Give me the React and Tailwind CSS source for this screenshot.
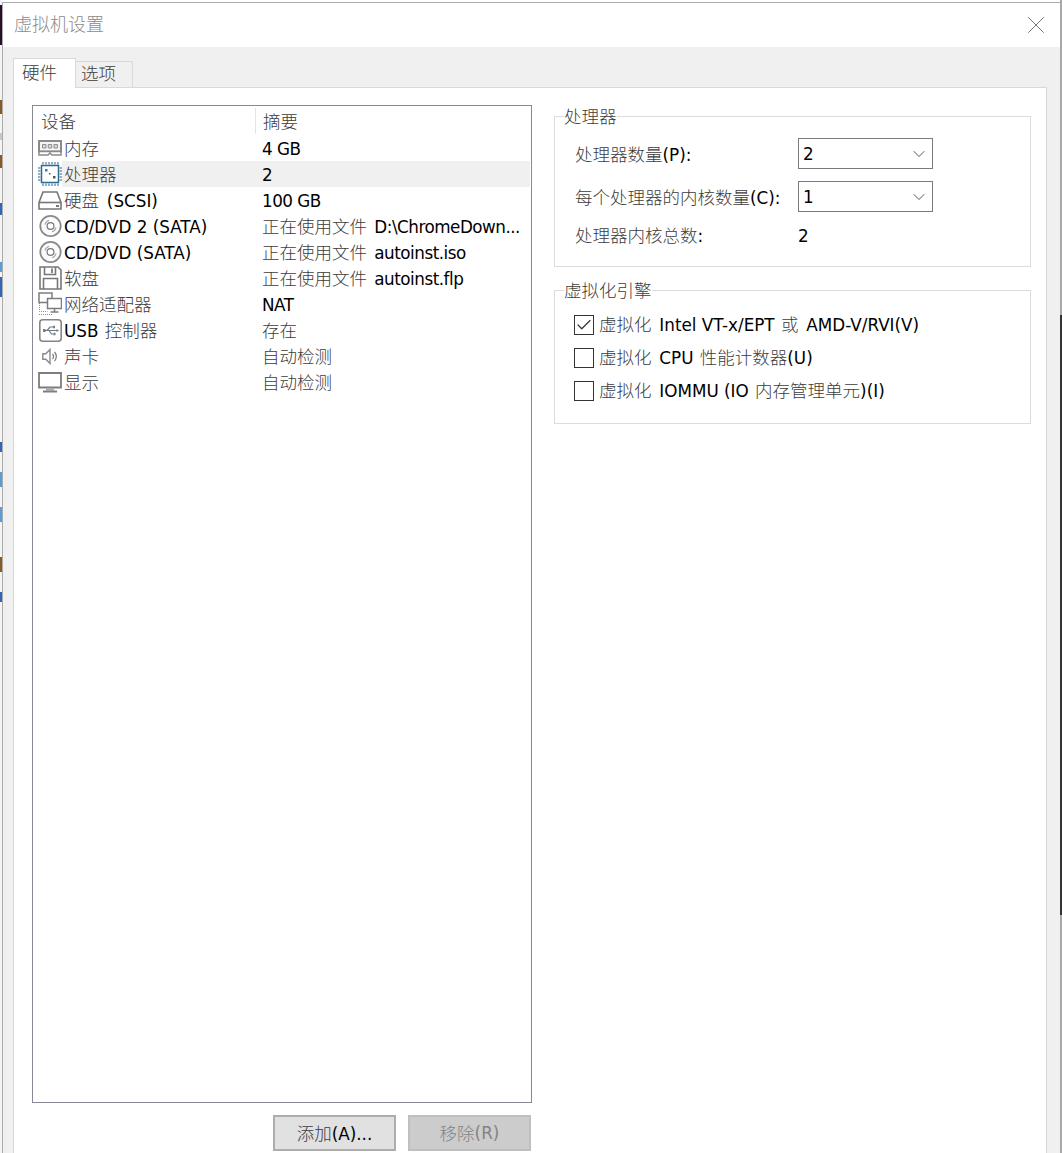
import { Check, ChevronDown, X } from 'lucide-react';

const FONT = "font-['DejaVu_Sans','Noto_Sans_CJK_SC',sans-serif]";

// cjk glyphs are thin, gray and a bit bigger in the dialog, latin ones are solid black.
// the space between cjk and latin is also wider than a plain one
function T({ children, className = '' }) {
  const parts = children.split(/([\u3000-\u9fff]+)/);
  return (
    <span className={className}>
      {parts.map((p, i) => {
        if (!/[\u3000-\u9fff]/.test(p)) return <span key={i}>{p}</span>;
        const gapAfter = parts[i + 1]?.startsWith(' ');
        const gapBefore = parts[i - 1]?.endsWith(' ');
        return (
          <span
            key={i}
            className={`text-[17.5px] font-light tracking-normal text-[#3c3c3c] ${gapAfter ? 'mr-[2.5px]' : ''} ${gapBefore ? 'ml-[1px]' : ''}`}
          >
            {p}
          </span>
        );
      })}
    </span>
  );
}

function MemoryIcon() {
  return (
    <svg width="24" height="16" viewBox="0 0 24 16" fill="none">
      <path d="M1 1h22v10.5H1z" stroke="#8a8a8a" strokeWidth="2" fill="#f5f5f5" />
      <path d="M1 11.5h22V15H14l-2-2-2 2H1z" stroke="#8a8a8a" strokeWidth="1.5" fill="#fff" />
      <path d="M4.5 4.5h3.500v3.500h-3.500zM10.250 4.500h3.500v3.500h-3.500zM16 4.500h3.500v3.500H16z" stroke="#8f8f8f" fill="#d8d8d8" />
    </svg>
  );
}

function CpuIcon() {
  return (
    <svg width="24" height="24" viewBox="0 0 24 24" fill="none">
      <rect x="3.5" y="3.5" width="17" height="17" stroke="#2f6a8f" strokeWidth="1.5" fill="#fff" />
      <path d="M5 0v2.500M8 0v2.500M11 0v2.500M14 0v2.500M17 0v2.500M20 0v2.500M5 21.500V24M8 21.500V24M11 21.500V24M14 21.500V24M17 21.500V24M20 21.500V24M0 6h2.500M0 9h2.500M0 12h2.500M0 15h2.500M0 18h2.500M21.500 6H24M21.500 9H24M21.500 12H24M21.500 15H24M21.500 18H24" stroke="#6b97b5" strokeWidth="1.500" />
      <path d="M7 7h2.500v2.500H7z" fill="#2f7fb0" />
      <path d="M15 14h2.500v2.500H15zM11 11h1.500v1.500H11z" fill="#4a5a66" />
    </svg>
  );
}

function DiskIcon() {
  return (
    <svg width="24" height="19" viewBox="0 0 24 19" fill="none">
      <path d="M5 1h14l4 10.500V18H1v-6.500z" stroke="#777" strokeWidth="1.600" fill="#fff" />
      <path d="M1 11.500h22" stroke="#777" strokeWidth="1.600" />
      <path d="M18 14h3v2h-3z" fill="#777" />
    </svg>
  );
}

function CdIcon() {
  return (
    <svg width="24" height="24" viewBox="0 0 24 24" fill="none">
      <circle cx="12.500" cy="12" r="10.200" stroke="#8a8a8a" strokeWidth="1.800" fill="#fbfbfb" />
      <circle cx="12.500" cy="12" r="3.400" stroke="#777" strokeWidth="1.200" fill="#fff" />
      <path d="M7 10.500a6 6 0 0 1 4-4.200M18 13.500a6 6 0 0 1-4 4.200" stroke="#a8a8a8" strokeWidth="1.200" />
    </svg>
  );
}

function FloppyIcon() {
  return (
    <svg width="24" height="24" viewBox="0 0 24 24" fill="none">
      <path d="M2 1h18l3 3v19H2z" stroke="#777" strokeWidth="1.600" fill="#fff" />
      <path d="M6.500 1v7.500h11V1M5.500 23V12.500h14V23" stroke="#777" strokeWidth="1.600" />
      <path d="M13 2.500h2V7h-2z" fill="#888" />
    </svg>
  );
}

function NetworkIcon() {
  return (
    <svg width="24" height="24" viewBox="0 0 24 24" fill="none">
      <path d="M1 1h13v9.500H1z" stroke="#7d7d7d" strokeWidth="1.500" fill="#fff" />
      <path d="M9.500 6.500h14v10h-14z" stroke="#7d7d7d" strokeWidth="1.500" fill="#fff" />
      <path d="M16.500 16.500v3M12.500 20h8" stroke="#7d7d7d" strokeWidth="1.500" />
      <path d="M1.500 11v8.500h8M1 22.500h14" stroke="#8a8a8a" strokeDasharray="1 1" />
    </svg>
  );
}

function UsbIcon() {
  return (
    <svg width="24" height="23" viewBox="0 0 24 23" fill="none">
      <rect x="1.800" y="0.800" width="21.400" height="21.400" rx="3" stroke="#858585" strokeWidth="1.600" fill="#fff" />
      <path d="M6 11.500h13M9 11.500l3-3.500h3M11 11.500l2.500 3.500h2" stroke="#6f7f88" strokeWidth="1.200" />
      <path d="M5 10h2.500v3H5zM15 6.800h2v2.400h-2zM15.500 13.800h2v2.400h-2z" fill="#6f7f88" />
      <path d="M18.500 10l2.500 1.500-2.500 1.500z" fill="#6f7f88" />
    </svg>
  );
}

function SoundIcon() {
  return (
    <svg width="24" height="17" viewBox="0 0 24 17" fill="none">
      <path d="M4.800 5.800h3l4.200-4.300v14l-4.200-4.300h-3z" stroke="#8a8a8a" strokeWidth="1.400" fill="#fff" />
      <path d="M14.500 6a3.500 3.500 0 0 1 0 5M16.500 4a6.500 6.500 0 0 1 0 9" stroke="#777" strokeWidth="1.200" />
    </svg>
  );
}

function MonitorIcon() {
  return (
    <svg width="24" height="21" viewBox="0 0 24 21" fill="none">
      <path d="M1 1h22v14.500H1z" stroke="#7d7d7d" strokeWidth="1.800" fill="#fff" />
      <path d="M8 16.500h8v2H8z" fill="#a8a8a8" />
      <path d="M5 19.500h14" stroke="#7d7d7d" strokeWidth="2" />
    </svg>
  );
}

const devices = [
  { icon: <MemoryIcon />, name: '内存', summary: '4 GB' },
  { icon: <CpuIcon />, name: '处理器', summary: '2', selected: true },
  { icon: <DiskIcon />, name: '硬盘 (SCSI)', summary: '100 GB' },
  { icon: <CdIcon />, name: 'CD/DVD 2 (SATA)', summary: '正在使用文件 D:\\ChromeDown...' },
  { icon: <CdIcon />, name: 'CD/DVD (SATA)', summary: '正在使用文件 autoinst.iso' },
  { icon: <FloppyIcon />, name: '软盘', summary: '正在使用文件 autoinst.flp' },
  { icon: <NetworkIcon />, name: '网络适配器', summary: 'NAT' },
  { icon: <UsbIcon />, name: 'USB 控制器', summary: '存在' },
  { icon: <SoundIcon />, name: '声卡', summary: '自动检测' },
  { icon: <MonitorIcon />, name: '显示', summary: '自动检测' },
];

function DeviceRow({ icon, name, summary, selected }) {
  return (
    <div className="flex h-[26px] items-center">
      <div className="flex w-[25px] shrink-0 pl-[1px]">{icon}</div>
      <div className={`flex h-full flex-1 items-center pt-[2px] leading-[24px] ${selected ? 'bg-[#f0f0f0]' : ''}`}>
        <div className="w-[199px] shrink-0 whitespace-nowrap pl-[2px]"><T>{name}</T></div>
        <div className="whitespace-nowrap pl-[1px] tracking-[-0.5px]"><T>{summary}</T></div>
      </div>
    </div>
  );
}

function GroupBox({ title, className, children }) {
  return (
    <div className={`relative border border-[#dcdcdc] ${className}`}>
      <div className="absolute -top-[13px] left-[9px] bg-white leading-[26px]"><T>{title}</T></div>
      {children}
    </div>
  );
}

function Select({ value }) {
  return (
    <div className="flex h-[31px] w-[135px] items-center justify-between border border-[#7a7a7a] pl-[4px] pr-[3px]">
      <span>{value}</span>
      <ChevronDown size={20} strokeWidth={1} className="text-[#333]" />
    </div>
  );
}

function CheckRow({ checked, label }) {
  return (
    <div className="flex h-[33px] items-center gap-[5px]">
      <div className="flex h-[20px] w-[20px] items-center justify-center border border-[#333]">
        {checked && <Check size={18} strokeWidth={1.6} className="text-[#333]" />}
      </div>
      <T className="pt-[2px]">{label}</T>
    </div>
  );
}

export default function App() {
  return (
    <div className={`${FONT} relative flex h-[1153px] w-[1062px] overflow-hidden bg-white text-[16.8px] text-black`}>
      {/* slivers of the window behind the dialog */}
      <div className="flex w-[2px] shrink-0 flex-col bg-[#f4f4f4]">
        <div className="mt-[5px] h-[40px] bg-[#2a0f2a]" />
        <div className="mt-[55px] h-[14px] bg-[#8a5a20]" />
        <div className="mt-[19px] h-[7px] bg-[#c8c8c8]" />
        <div className="mt-[15px] h-[13px] bg-[#8a5a20]" />
        <div className="mt-[35px] h-[12px] bg-[#2f68b8]" />
        <div className="mt-[47px] h-[10px] bg-[#5b9bd8]" />
        <div className="mt-[5px] h-[20px] bg-[#2f68b8]" />
        <div className="mt-[145px] h-[10px] bg-[#2f68b8]" />
        <div className="mt-[20px] h-[15px] bg-[#5b9bd8]" />
        <div className="mt-[20px] h-[15px] bg-[#5b9bd8]" />
        <div className="mt-[35px] h-[15px] bg-[#8a5a20]" />
        <div className="mt-[20px] h-[10px] bg-[#2f68b8]" />
      </div>
      <div className="mt-[2px] flex min-w-0 flex-1 flex-col border-t border-l border-[#ababab]">
        <div className="flex h-[44px] shrink-0 items-center justify-between bg-white pl-[11px] pr-[9px]">
          <span className="text-[18px] font-light leading-[40px] text-[#8c8c8c]">虚拟机设置</span>
          <X size={30} strokeWidth={0.8} className="text-[#777]" />
        </div>
        <div className="flex min-h-0 flex-1 flex-col bg-[#f0f0f0] pl-[10px] pr-[13px] pt-[11px]">
          <div className="relative z-10 flex h-[30px] shrink-0 items-end">
            <div className="flex h-[30px] w-[63px] items-center border border-b-0 border-[#d9d9d9] bg-white pl-[8px]"><T>硬件</T></div>
            <div className="flex h-[27px] w-[57px] items-center border border-b-0 border-l-0 border-[#d9d9d9] pb-[2px] pl-[5px]"><T>选项</T></div>
          </div>
          <div className="-mt-[1px] flex min-h-0 flex-1 gap-[22px] border border-b-0 border-[#d9d9d9] bg-white pl-[18px] pt-[17px]">
            <div className="flex w-[500px] shrink-0 flex-col">
              <div className="h-[998px] border border-[#878a94] pl-[4px] pr-[1px]">
                <div className="flex h-[29px] items-center">
                  <div className="w-[218px] pl-[4px] pt-[4px]"><T>设备</T></div>
                  <div className="flex h-[26px] items-center border-l border-[#e3e3e3] pl-[7px] pt-[4px]"><T>摘要</T></div>
                </div>
                {devices.map((d) => (
                  <DeviceRow key={d.name} {...d} />
                ))}
              </div>
              <div className="mt-[12px] flex justify-end gap-[12px] pr-[1px]">
                <div className="flex h-[36px] w-[123px] items-center justify-center border-2 border-[#adadad] bg-[#e1e1e1] pt-[2px]"><T>添加(A)...</T></div>
                <div className="flex h-[36px] w-[123px] items-center justify-center border-2 border-[#bfbfbf] bg-[#cccccc] pt-[2px] text-[#838383]">
                  <span className="text-[17.5px] font-light">移除</span>(R)
                </div>
              </div>
            </div>
            <div className="w-[477px] shrink-0 pt-[11px]">
              <GroupBox title="处理器" className="h-[151px] pl-[20px] pt-[21px]">
                <div className="grid grid-cols-[223px_135px] items-center gap-y-[12px] leading-[24px]">
                  <T className="pt-[2px]">处理器数量(P):</T>
                  <Select value="2" />
                  <T className="pt-[2px]">每个处理器的内核数量(C):</T>
                  <Select value="1" />
                  <T>处理器内核总数:</T>
                  <span>2</span>
                </div>
              </GroupBox>
              <GroupBox title="虚拟化引擎" className="mt-[23px] h-[134px] pl-[19px] pt-[17px]">
                <CheckRow checked label="虚拟化 Intel VT-x/EPT 或 AMD-V/RVI(V)" />
                <CheckRow label="虚拟化 CPU 性能计数器(U)" />
                <CheckRow label="虚拟化 IOMMU (IO 内存管理单元)(I)" />
              </GroupBox>
            </div>
          </div>
        </div>
      </div>
      <div className="flex w-[2px] shrink-0 flex-col bg-[#a8a8a8]">
        <div className="mt-[315px] h-[600px] bg-[#333333]" />
      </div>
    </div>
  );
}
